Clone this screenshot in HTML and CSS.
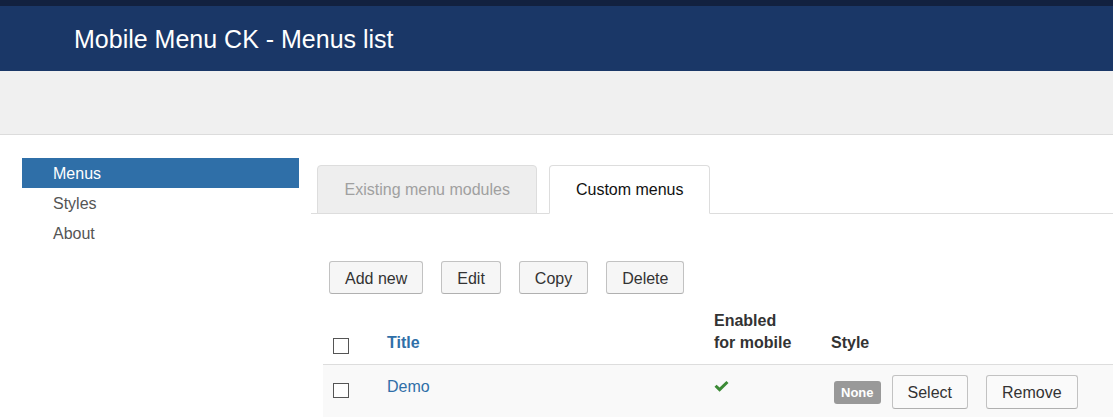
FILE: index.html
```html
<!DOCTYPE html>
<html>
<head>
<meta charset="utf-8">
<title>Mobile Menu CK - Menus list</title>
<link rel="stylesheet" href="styles.css">
</head>
<body>
<div class="topbar"></div>
<header class="header"><h1 class="page-title">Mobile Menu CK - Menus list</h1></header>
<div class="subhead"></div>
<div class="layout">
  <nav class="sidebar">
    <a class="side-link active">Menus</a>
    <a class="side-link">Styles</a>
    <a class="side-link">About</a>
  </nav>
  <main class="main">
    <ul class="tabs">
      <li class="tab">Existing menu modules</li>
      <li class="tab active">Custom menus</li>
    </ul>
    <div class="tab-content">
      <div class="toolbar">
        <button class="btn">Add new</button>
        <button class="btn">Edit</button>
        <button class="btn">Copy</button>
        <button class="btn">Delete</button>
      </div>
      <table class="list">
        <colgroup>
          <col class="c-check">
          <col class="c-title">
          <col class="c-enabled">
          <col class="c-style">
        </colgroup>
        <thead>
          <tr>
            <th><span class="checkbox"></span></th>
            <th><a class="sort-link">Title</a></th>
            <th>Enabled<br>for mobile</th>
            <th>Style</th>
          </tr>
        </thead>
        <tbody>
          <tr>
            <td><span class="checkbox row-check"></span></td>
            <td><a class="item-link">Demo</a></td>
            <td>
              <svg class="check" width="15" height="11" viewBox="0 0 15 11"><path d="M0.5 5.8 L2.6 3.7 L5.6 6.6 L12.4 0 L14.5 2.1 L5.6 10.8 Z" fill="#3b8a35"/></svg>
            </td>
            <td>
              <div class="style-cell">
                <span class="badge">None</span>
                <button class="btn btn-row">Select</button>
                <button class="btn btn-row btn-remove">Remove</button>
              </div>
            </td>
          </tr>
        </tbody>
      </table>
    </div>
  </main>
</div>
</body>
</html>
```
FILE: styles.css
```css
* { box-sizing: border-box; }
html, body {
  margin: 0;
  padding: 0;
  background: #fff;
  font-family: "Liberation Sans", Arial, sans-serif;
  font-size: 16px;
  color: #333;
  overflow: hidden;
}
.topbar {
  height: 6px;
  background: #12213f;
}
.header {
  height: 65px;
  background: #1a3767;
  display: flex;
  align-items: center;
  padding-left: 74px;
}
.page-title {
  margin: 0;
  font-size: 25px;
  font-weight: normal;
  color: #fff;
  line-height: 30px;
}
.subhead {
  height: 64px;
  background: #f0f0f0;
  border-bottom: 1px solid #dcdcdc;
}
.layout {
  display: flex;
  padding: 23px 0 0 22px;
}
.sidebar {
  width: 277px;
  flex: none;
  display: flex;
  flex-direction: column;
}
.side-link {
  display: block;
  height: 30px;
  line-height: 28px;
  padding: 2px 0 0 31px;
  color: #555;
}
.side-link.active {
  background: #2f6fa8;
  color: #fff;
}
.main {
  flex: 1;
  margin-left: 12px;
  min-width: 0;
}
.tabs {
  list-style: none;
  margin: 7px 0 0 0;
  padding: 0 0 0 6px;
  display: flex;
  border-bottom: 1px solid #dddddd;
}
.tab {
  padding: 13px 26.5px 12px;
  line-height: 22px;
  border: 1px solid #dddddd;
  border-radius: 4px 4px 0 0;
  margin-bottom: -1px;
  margin-right: 12px;
  background: #eeeeee;
  color: #a0a0a0;
}
.tab.active {
  padding-left: 25.5px;
  padding-right: 25.5px;
  background: #fff;
  color: #111;
  border-bottom-color: #fff;
}
.tab-content {
  padding-left: 12px;
}
.toolbar {
  display: flex;
  gap: 18px;
  margin: 47px 0 0 6px;
}
.btn {
  font-family: "Liberation Sans", Arial, sans-serif;
  font-size: 16px;
  color: #333;
  height: 33px;
  padding: 2px 15px 0;
  background: #f6f6f6;
  border: 1px solid #c2c2c2;
  border-bottom-color: #b0b0b0;
  border-radius: 3px;
  line-height: 20px;
}
.list {
  width: 100%;
  margin-top: 7px;
  border-collapse: collapse;
  table-layout: fixed;
}
.c-check { width: 54px; }
.c-title { width: 327px; }
.c-enabled { width: 117px; }
.list th {
  text-align: left;
  vertical-align: bottom;
  padding: 9px 10px 10px;
  line-height: 22px;
  font-weight: bold;
  color: #333;
  border-bottom: 1px solid #dddddd;
}
.list td {
  vertical-align: top;
  padding: 11px 10px 10px;
  line-height: 22px;
  background: #f9f9f9;
  height: 60px;
}
.checkbox {
  display: block;
  width: 16px;
  height: 16px;
  border: 1px solid #555;
  background: #fff;
}
.row-check {
  width: 16px;
  height: 15px;
  margin-top: 7px;
}
.sort-link {
  color: #2f6fa8;
}
.item-link {
  color: #2f6fa8;
}
.check {
  display: block;
  margin-top: 5px;
}
.style-cell {
  display: flex;
  align-items: center;
  padding-left: 3px;
  margin-top: -1px;
}
.badge {
  display: inline-block;
  background: #999;
  color: #fff;
  font-size: 13px;
  font-weight: bold;
  line-height: 23px;
  height: 23px;
  padding: 0 7px;
  border-radius: 3px;
  margin-right: 11px;
}
.btn-row {
  height: 34px;
  background: #fafafa;
}
.btn-remove {
  margin-left: 18px;
}
```
